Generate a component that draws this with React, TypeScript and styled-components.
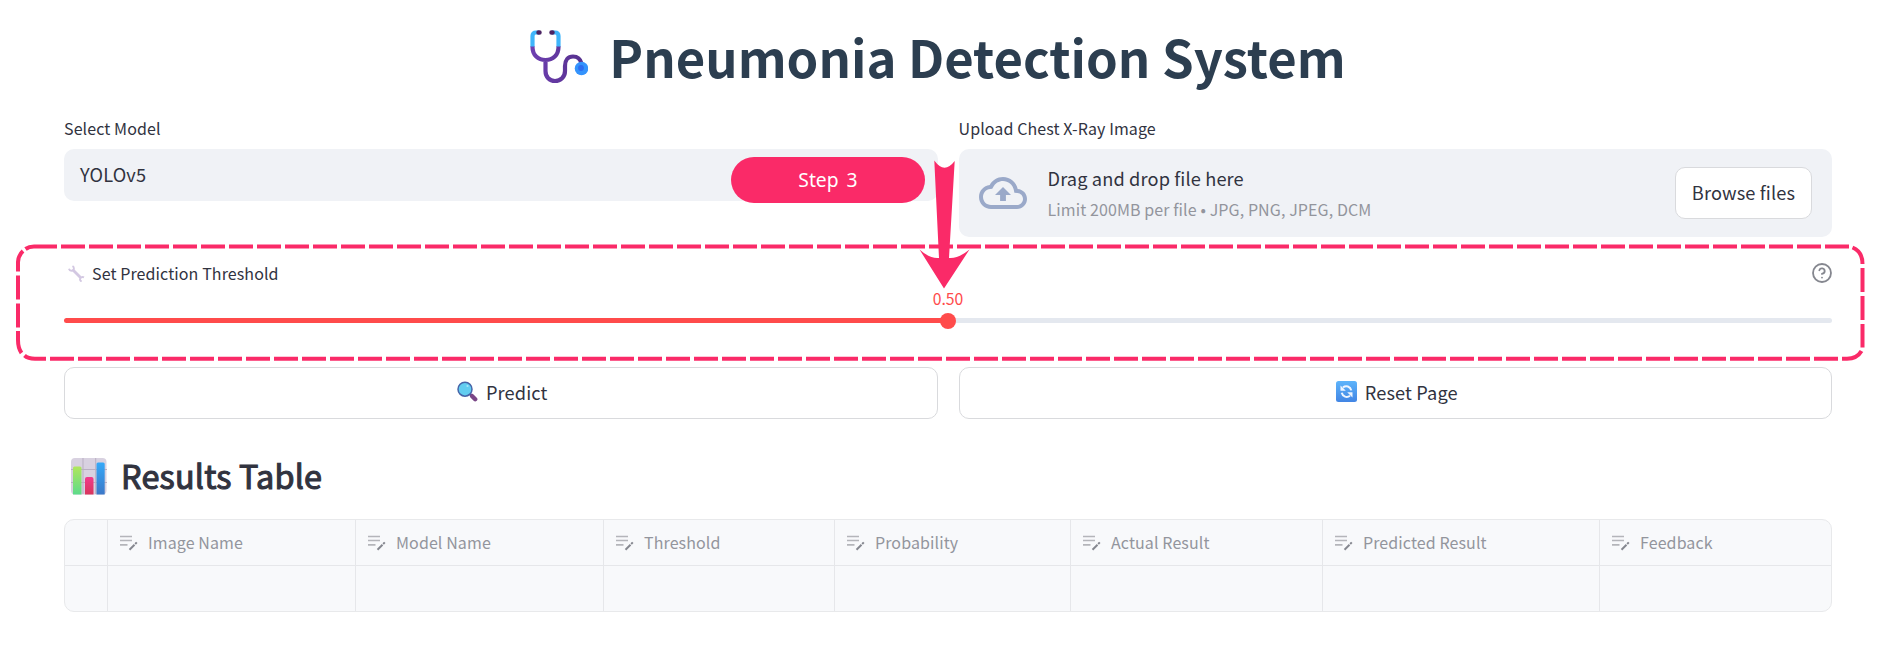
import React from "react";
import styled, { createGlobalStyle } from "styled-components";

const GlobalStyle = createGlobalStyle`
  * { box-sizing: border-box; }
  body {
    margin: 0;
    background: #fff;
    color: #31333f;
    font-family: "Noto Sans CJK JP", "Source Sans Pro", "Open Sans", sans-serif;
  }
  svg { display: block; flex: none; }
  h1, h2, p { margin: 0; }
`;

const Page = styled.main`
  position: relative;
  width: 1884px;
  height: 668px;
  padding: 0 52px 0 64px;
  overflow: hidden;
`;

const Title = styled.h1`
  display: flex;
  justify-content: center;
  align-items: center;
  gap: 21px;
  height: 111px;
  padding: 2px 20px 0 0;
  font-size: 50.8px;
  font-weight: 700;
  line-height: 106px;
  color: #2c3e50;
  white-space: nowrap;

  span { padding-bottom: 2px; }
`;

const Columns = styled.section<{ $height: number }>`
  display: grid;
  grid-template-columns: 1fr 1fr;
  column-gap: 21px;
  height: ${(p) => p.$height}px;
`;

const Field = styled.div`
  padding-top: 5px;
`;

const Label = styled.div`
  height: 33px;
  font-size: 16px;
  letter-spacing: 0.1px;
  line-height: 24px;
  white-space: nowrap;
`;

const SelectBox = styled.div`
  height: 52px;
  padding-left: 16px;
  border-radius: 10px;
  background: #f0f2f6;
  font-size: 18.2px;
  letter-spacing: 0.14px;
  line-height: 50px;
`;

const DropZone = styled.div`
  display: flex;
  align-items: center;
  height: 88px;
  padding: 0 20px;
  border-radius: 10px;
  background: #f0f2f6;
`;

const DropText = styled.div`
  flex: 1;
  margin-left: 21px;
  white-space: nowrap;
`;

const DropTitle = styled.p`
  font-size: 18.2px;
  letter-spacing: 0.14px;
  line-height: 32px;
`;

const DropHint = styled.p`
  font-size: 16px;
  letter-spacing: 0.1px;
  line-height: 31px;
  color: #93959d;
`;

const Button = styled.button<{ $width?: number }>`
  display: flex;
  justify-content: center;
  align-items: center;
  gap: 8px;
  width: ${(p) => (p.$width ? `${p.$width}px` : "100%")};
  height: 52px;
  padding: ${(p) => (p.$width ? "0 0 2px" : "0 0 3px 3px")};
  border: 1px solid #d9dadd;
  border-radius: 10px;
  background: #fff;
  color: #31333f;
  font: inherit;
  font-size: 18.2px;
  letter-spacing: 0.14px;
  line-height: 46px;
  white-space: nowrap;
`;

const SliderBlock = styled.section`
  height: 130px;
  padding-top: 24px;
`;

const SliderHead = styled.div`
  display: flex;
  align-items: center;
  height: 24px;
  padding-left: 4px;
  font-size: 16px;
  letter-spacing: 0.1px;
  line-height: 24px;
`;

const SliderLabel = styled.span`
  flex: 1;
  margin-left: 7px;
`;

const SliderValue = styled.div`
  height: 27px;
  text-align: center;
  font-size: 15.75px;
  line-height: 27px;
  color: #ff4b4b;
`;

const SliderRow = styled.div`
  display: flex;
  align-items: center;
  height: 17px;
`;

const Track = styled.div<{ $filled?: boolean }>`
  flex: 1;
  height: 5px;
  border-radius: ${(p) => (p.$filled ? "3px 0 0 3px" : "0 3px 3px 0")};
  background: ${(p) => (p.$filled ? "#ff4b4b" : "#e4e8ef")};
`;

const Thumb = styled.div`
  width: 16px;
  height: 16px;
  margin: 0 -1px;
  border-radius: 50%;
  background: #ff4b4b;
  z-index: 1;
`;

const Heading = styled.h2`
  display: flex;
  align-items: center;
  gap: 14px;
  height: 100px;
  padding: 14px 0 0 7px;
  font-size: 32.4px;
  font-weight: 400;
  letter-spacing: 0.2px;
  -webkit-text-stroke: 1.1px #31333f;
  line-height: 82px;
  color: #31333f;

  span { padding-bottom: 3px; }
`;

const Table = styled.div`
  display: grid;
  grid-template-columns: 43px 248px 248px 231px 236px 252px 277px 1fr;
  grid-template-rows: 46px 45px;
  border: 1px solid #e8e9eb;
  border-radius: 10px;
  background: #f8f9fb;
  overflow: hidden;
`;

const Cell = styled.div<{ $head?: boolean; $last?: boolean }>`
  display: flex;
  align-items: center;
  gap: 10px;
  padding-left: 12px;
  border-right: ${(p) => (p.$last ? "none" : "1px solid #e6e7ea")};
  border-bottom: ${(p) => (p.$head ? "1px solid #e6e7ea" : "none")};
  font-size: 16px;
  letter-spacing: 0.1px;
  line-height: 45px;
  color: #93959d;
  white-space: nowrap;
`;

const Overlay = styled.svg`
  position: absolute;
  inset: 0;
  pointer-events: none;
`;

const StepBadge = styled.div`
  position: absolute;
  left: 731px;
  top: 157px;
  width: 194px;
  height: 46px;
  border-radius: 23px;
  background: #fa2a68;
  color: #fff;
  font: 19.3px/46px "Noto Sans", sans-serif;
  text-align: center;
  word-spacing: 3px;
`;

const Stethoscope = () => (
  <svg width="58" height="56" viewBox="0 0 58 56" fill="none">
    <defs>
      <linearGradient id="tube" x1="0" x2="1">
        <stop offset="0" stopColor="#6d3fb0" />
        <stop offset="1" stopColor="#57318f" />
      </linearGradient>
    </defs>
    <path d="M2.500 17v1c0 8 5.500 13 13 13s13-5 13-13v-1M15.500 31v11c0 6 4 10 9.500 10s10-4 10-10V37c0-6 3-9.500 8-9.500s7.500 3 8.500 7" stroke="url(#tube)" strokeWidth="4.200" />
    <path d="M9 3.500H6Q2.500 3.500 2.500 7v10.500M22 3.500h3q3.500 0 3.500 3.500v10.500" stroke="#3eb5fb" strokeWidth="4.200" />
    <path d="M8.500 3.500h1M21.500 3.500h1" stroke="#4b2463" strokeWidth="4.500" strokeLinecap="round" />
    <circle cx="51.500" cy="39.500" r="6.800" fill="#3493fc" />
    <circle cx="51" cy="39" r="2.900" fill="#2d6df0" />
  </svg>
);

const CloudUpload = () => (
  <svg width="48" height="48" viewBox="0 0 24 24" fill="#9aa9c9">
    <path d="M19.350 10.040C18.670 6.590 15.640 4 12 4 9.110 4 6.600 5.640 5.350 8.040 2.340 8.360 0 10.910 0 14c0 3.310 2.690 6 6 6h13c2.760 0 5-2.240 5-5 0-2.640-2.050-4.780-4.650-4.960zM19 18H6c-2.210 0-4-1.790-4-4 0-2.050 1.530-3.760 3.560-3.970l1.070-.11.5-.95C8.080 7.140 9.940 6 12 6c2.620 0 4.880 1.860 5.390 4.430l.3 1.500 1.530.11c1.560.1 2.780 1.410 2.780 2.960 0 1.650-1.350 3-3 3zM8 13h2.550v3h2.900v-3H16l-4-4z" />
  </svg>
);

const Wrench = () => (
  <svg width="17" height="17" viewBox="0 0 17 17" fill="none">
    <path d="M4.500 4.500l8 8" stroke="#d3c8e2" strokeWidth="2.800" />
    <path d="M4.500 1c1.800 1 2 4-.2 4.600C2.600 6 1.300 5 .9 3.800M16 12.300c-1.800-.9-4.100.2-4 2 .1 1.200.8 1.900 1.700 2.100" stroke="#d3c8e2" strokeWidth="1.900" />
  </svg>
);

const HelpIcon = styled.svg`
  margin-right: -1px;
`;

const Help = () => (
  <HelpIcon width="22" height="22" viewBox="0 0 24 24" fill="none" stroke="#85878f" strokeWidth="2" strokeLinecap="round" strokeLinejoin="round">
    <circle cx="12" cy="12" r="9.800" />
    <path d="M9.090 9a3 3 0 0 1 5.830 1c0 2-3 3-3 3M12 17h.01" />
  </HelpIcon>
);

const Magnifier = () => (
  <svg width="21" height="21" viewBox="0 0 21 21" fill="none">
    <path d="M12.500 12.500l3 3" stroke="#57458c" strokeWidth="2.500" />
    <path d="M15.200 15.200l3 3" stroke="#7a4686" strokeWidth="4.400" strokeLinecap="round" />
    <circle cx="8" cy="8.200" r="7" fill="#62cdf0" stroke="#4664a8" strokeWidth="1.500" />
    <circle cx="10.500" cy="5" r="1.100" fill="#a9e6f8" />
  </svg>
);

const Reset = () => (
  <svg width="21" height="21" viewBox="0 0 21 21" fill="none">
    <defs>
      <linearGradient id="resetFill" x2="0" y2="1">
        <stop stopColor="#5db4fb" />
        <stop offset="1" stopColor="#4285e4" />
      </linearGradient>
    </defs>
    <rect width="21" height="21" rx="2.500" fill="url(#resetFill)" />
    <path d="M7 6.400c3-2.300 7.400-1 8.300 3M14 14.800c-3 2.200-7.300 1-8.300-3" stroke="#eef5ff" strokeWidth="2" />
    <path d="M4.500 4.500v5.300h5.300zM16.500 16.500v-5.300h-5.300z" fill="#eef5ff" />
  </svg>
);

const BarChart = () => (
  <svg width="36" height="37" viewBox="0 0 36 37">
    <defs>
      <linearGradient id="green" x2="0" y2="1"><stop stopColor="#b0e65c" /><stop offset="1" stopColor="#5ddb8b" /></linearGradient>
      <linearGradient id="pink" x2="0" y2="1"><stop stopColor="#f23a8c" /><stop offset="1" stopColor="#d8365c" /></linearGradient>
      <linearGradient id="blue" x2="0" y2="1"><stop stopColor="#35a9f8" /><stop offset="1" stopColor="#3c78c8" /></linearGradient>
    </defs>
    <rect width="35.500" height="36.500" rx="4" fill="#d8d1e0" />
    <path d="M12 0v36M24.700 0v36M0 11.500h36M0 24.500h36" stroke="#b9afc2" strokeWidth="1" />
    <path d="M2 36.500V10q0-1.500 1.500-1.500h5.500q1.500 0 1.500 1.500v26.500z" fill="url(#green)" />
    <path d="M14 36.500V21q0-2 2-2h4.500q2 0 2 2v15.500z" fill="url(#pink)" />
    <path d="M25.500 36.500V6q0-1.500 1.500-1.500h5.200q1.500 0 1.500 1.500v30.500z" fill="url(#blue)" />
  </svg>
);

const EditNote = () => (
  <svg width="18" height="16" viewBox="0 0 18 16" fill="none">
    <path d="M0 1.500h12M0 5.500h12M0 9.800h7.500" stroke="#b4b5ba" strokeWidth="1.700" />
    <path d="M9.500 14.800l5-5" stroke="#85878f" strokeWidth="2" />
    <path d="M15.200 9l1.600-1.600" stroke="#85878f" strokeWidth="2" />
  </svg>
);

const columns = ["Image Name", "Model Name", "Threshold", "Probability", "Actual Result", "Predicted Result", "Feedback"];

export default function App() {
  return (
    <Page>
      <GlobalStyle />
      <Title>
        <Stethoscope />
        <span>Pneumonia Detection System</span>
      </Title>

      <Columns $height={126}>
        <Field>
          <Label>Select Model</Label>
          <SelectBox>YOLOv5</SelectBox>
        </Field>
        <Field>
          <Label>Upload Chest X-Ray Image</Label>
          <DropZone>
            <CloudUpload />
            <DropText>
              <DropTitle>Drag and drop file here</DropTitle>
              <DropHint>Limit 200MB per file • JPG, PNG, JPEG, DCM</DropHint>
            </DropText>
            <Button $width={137}>Browse files</Button>
          </DropZone>
        </Field>
      </Columns>

      <SliderBlock>
        <SliderHead>
          <Wrench />
          <SliderLabel>Set Prediction Threshold</SliderLabel>
          <Help />
        </SliderHead>
        <SliderValue>0.50</SliderValue>
        <SliderRow>
          <Track $filled />
          <Thumb />
          <Track />
        </SliderRow>
      </SliderBlock>

      <Columns $height={52}>
        <Button><Magnifier />Predict</Button>
        <Button><Reset />Reset Page</Button>
      </Columns>

      <Heading><BarChart /><span>Results Table</span></Heading>

      <Table>
        <Cell $head />
        {columns.map((name, i) => (
          <Cell key={name} $head $last={i === columns.length - 1}><EditNote />{name}</Cell>
        ))}
        <Cell />
        {columns.map((name, i) => (
          <Cell key={name} $last={i === columns.length - 1} />
        ))}
      </Table>

      <Overlay width="1884" height="668" fill="none">
        <g stroke="#fa2a68" strokeWidth="4">
          <path d="M25.500 249Q29 246.500 34 246.500H57" />
          <path d="M61 246.500H1849" strokeDasharray="24 4" />
          <path d="M1852.500 247.500Q1862.500 251.500 1862.500 264" />
          <path d="M1862.500 268V347.500" strokeDasharray="24 4" />
          <path d="M1861.500 351Q1857 358.700 1847 358.700H1842" />
          <path d="M1838 358.700H50" strokeDasharray="24 4" />
          <path d="M46 358.700H35Q28 358.700 24.500 355.500" />
          <path d="M21.500 353Q18 348 18 340V331" />
          <path d="M18 327.500V275.500" strokeDasharray="24 4" />
          <path d="M18 271.500V262Q18.500 255 23 251" />
        </g>
        <path d="M934.300 160.500Q944.300 174.500 954.700 161L949 258Q958 259 969.500 249.500L944 288.500 919.500 249.500Q930 259 939 258Z" fill="#fa2a68" />
      </Overlay>
      <StepBadge>Step 3</StepBadge>
    </Page>
  );
}
